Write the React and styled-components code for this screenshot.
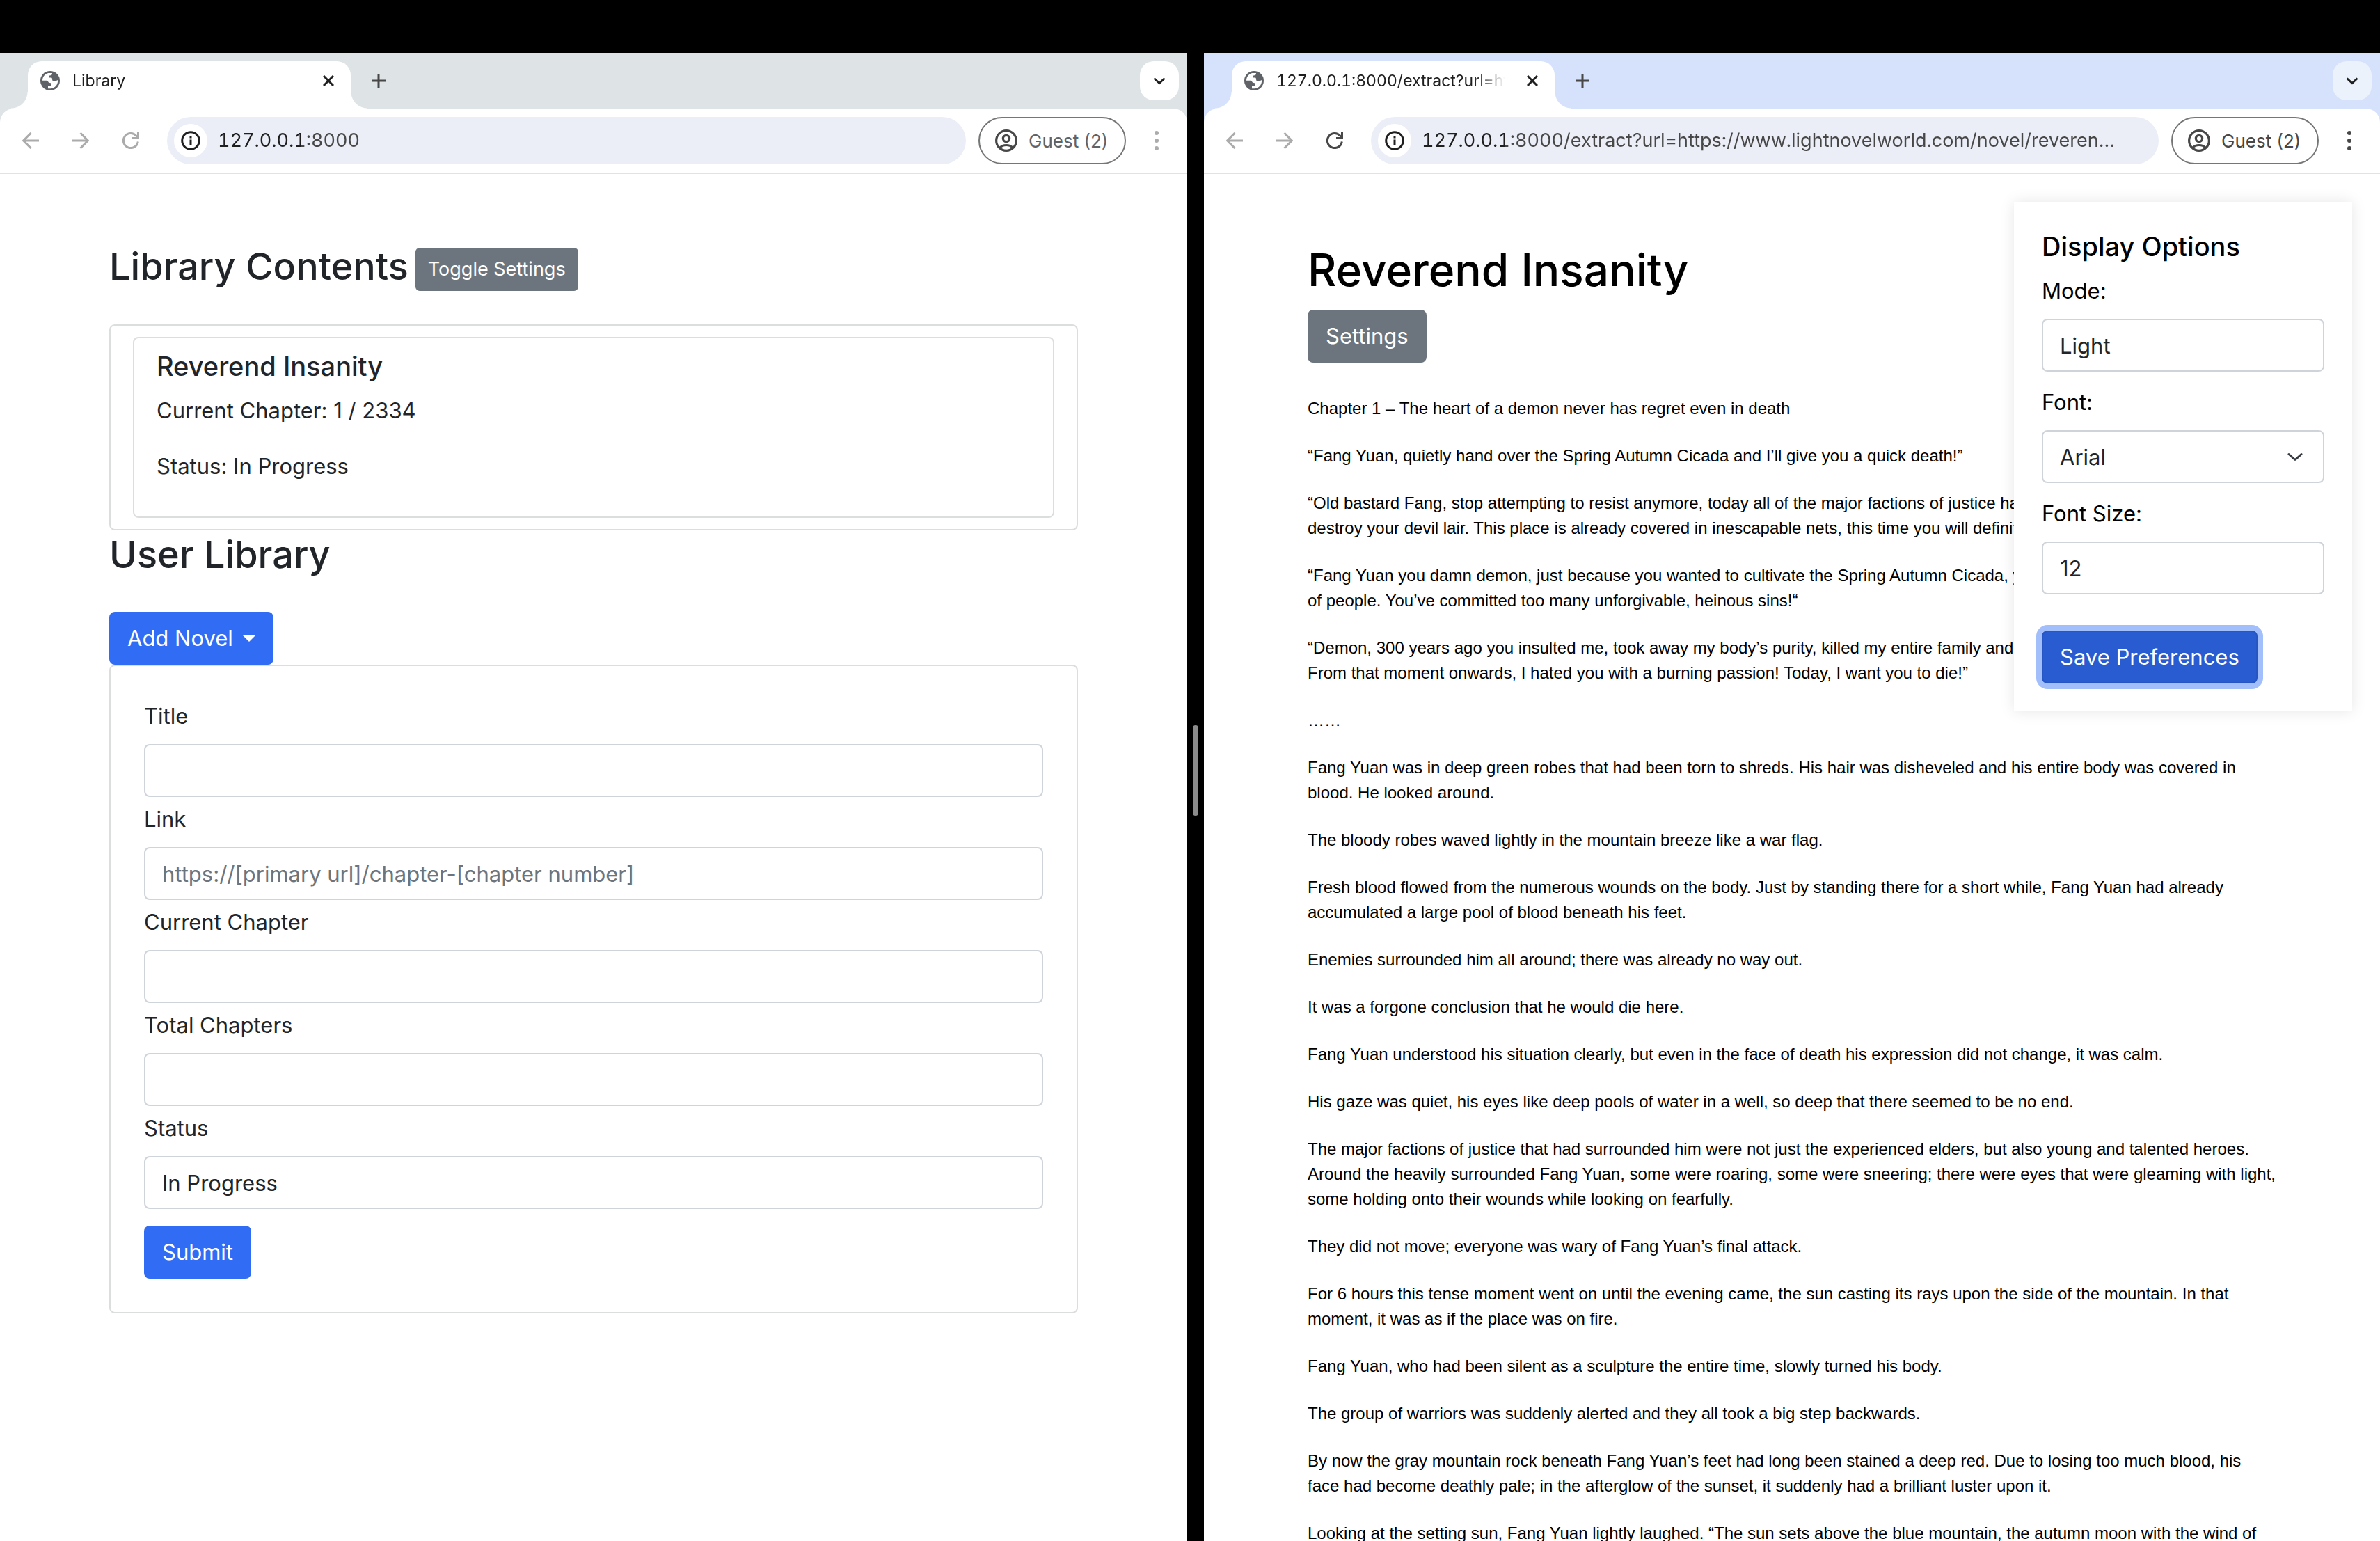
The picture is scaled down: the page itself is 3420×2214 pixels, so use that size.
import React from "react";
import styled, { createGlobalStyle } from "styled-components";

const UI_FONT = `Inter, "Liberation Sans", sans-serif`;
const ARIAL = `"Liberation Sans", Arial, sans-serif`;

const GlobalStyle = createGlobalStyle`
  *, *::before, *::after { box-sizing: border-box; }
  body { margin: 0; background: #000; font-family: ${UI_FONT}; }
  h1, h2, h3, h5, p { margin: 0; }
  button, input, select { margin: 0; font-family: inherit; }
`;

/* ---------- Desktop split view ---------- */

const Desktop = styled.div`
  display: grid;
  grid-template-columns: minmax(0, 853fr) 24px minmax(0, 845fr);
  height: 100vh;
  padding-top: 76px;
  overflow: hidden;
  background: #000;
`;

const Divider = styled.div`
  display: flex;
  justify-content: center;
  align-items: center;
  padding-bottom: 76px;
`;

const DividerHandle = styled.div`
  width: 8px;
  height: 130px;
  border-radius: 4px;
  background: #8c8c8c;
`;

const Window = styled.section`
  display: flex;
  flex-direction: column;
  min-width: 0;
  min-height: 0;
  background: ${(p) => p.$frame};
`;

/* ---------- Browser chrome ---------- */

const TabStrip = styled.div`
  display: flex;
  align-items: flex-start;
  height: 80px;
  padding: 12px 12px 0 40px;
`;

const Tab = styled.div`
  position: relative;
  display: flex;
  align-items: center;
  width: 464px;
  height: 68px;
  padding: 0 24px 12px 18px;
  border-radius: 20px 20px 0 0;
  background: #fff;

  &::before,
  &::after {
    content: "";
    position: absolute;
    bottom: 0;
    width: 24px;
    height: 24px;
  }
  &::before {
    right: 100%;
    background: radial-gradient(circle at 0 0, transparent 23px, #fff 24px);
  }
  &::after {
    left: 100%;
    background: radial-gradient(circle at 100% 0, transparent 23px, #fff 24px);
  }
`;

const TabTitle = styled.span`
  flex: 1;
  min-width: 0;
  margin: 0 31px 0 18px;
  overflow: hidden;
  white-space: nowrap;
  font-size: 23px;
  line-height: 32px;
  font-variant-numeric: tabular-nums;
  color: #1f1f1f;
  mask-image: linear-gradient(to left, transparent, #000 44px);
`;

const IconButton = styled.button`
  display: flex;
  align-items: center;
  justify-content: center;
  flex: none;
  padding: 0;
  border: 0;
  background: none;
  color: ${(p) => p.$color || "#474747"};
`;

const NewTabButton = styled(IconButton)`
  height: 56px;
  margin-left: 30px;
`;

const TabSearchButton = styled(IconButton)`
  width: 56px;
  height: 56px;
  margin-left: auto;
  border-radius: 20px;
  background: ${(p) => p.$fill};
`;

const Toolbar = styled.div`
  display: flex;
  align-items: center;
  padding: 12px 32px;
  border-radius: 20px 20px 0 0;
  border-bottom: 2px solid #e1e3e1;
  background: #fff;
`;

const NavButtons = styled.div`
  display: flex;
  gap: 48px;
  margin-right: 40px;
`;

const AddressBar = styled.label`
  display: flex;
  align-items: center;
  flex: 1;
  min-width: 0;
  height: 68px;
  padding: 0 52px 0 10px;
  border-radius: 34px;
  background: #ebeef7;
`;

const SiteInfo = styled.span`
  display: flex;
  align-items: center;
  justify-content: center;
  flex: none;
  width: 48px;
  height: 48px;
  margin-right: 15px;
  border-radius: 50%;
  background: #fff;
  color: #1f1f1f;
`;

const UrlInput = styled.input`
  flex: 1;
  min-width: 0;
  padding: 0;
  border: 0;
  outline: 0;
  font-size: 27px;
  line-height: 40px;
  font-variant-numeric: tabular-nums;
  text-overflow: ellipsis;
  color: transparent;
  background: linear-gradient(to right, #1f1f1f 120px, #474747 120px);
  background-clip: text;
  -webkit-background-clip: text;
`;

const ProfileButton = styled.button`
  display: flex;
  align-items: center;
  flex: none;
  gap: 16px;
  width: 212px;
  height: 68px;
  margin: 0 32px 0 18px;
  padding: 0 0 0 22px;
  border: 2px solid #747775;
  border-radius: 34px;
  background: #fff;
  font-size: 26px;
  white-space: nowrap;
  color: ${(p) => p.$color};

  svg { flex: none; color: #474747; }
`;

const Page = styled.main`
  position: relative;
  flex: 1;
  min-height: 0;
  overflow: hidden;
  background: #fff;
`;

const Container = styled.div`
  max-width: 1440px;
  margin: 0 auto;
  padding: 96px 24px 0;
  color: ${(p) => p.$color};
`;

/* ---------- Shared form parts ---------- */

const Button = styled.button`
  display: inline-flex;
  align-items: center;
  gap: 14px;
  padding: 12px 24px;
  border: 2px solid ${(p) => p.$edge || p.$fill};
  border-radius: 8px;
  background: ${(p) => p.$fill};
  box-shadow: ${(p) => (p.$focused ? "0 0 0 8px #a2bffc" : "none")};
  font-size: 31px;
  line-height: 48px;
  color: #fff;
`;

const SmallButton = styled(Button)`
  padding: 8px 16px;
  border-radius: 6px;
  font-size: 27px;
  line-height: 42px;
`;

const Caret = styled.span`
  border-top: 9px solid currentColor;
  border-left: 9px solid transparent;
  border-right: 9px solid transparent;
`;

const FieldLabel = styled.label`
  display: block;
  margin-bottom: 16px;
  font-size: 31px;
  line-height: 48px;
`;

const Control = styled.input`
  display: block;
  width: 100%;
  height: 76px;
  padding: 0 24px;
  border: 2px solid #ced4da;
  border-radius: 8px;
  outline: 0;
  appearance: none;
  background: #fff;
  font-size: 31px;
  color: #212529;

  &::placeholder { color: #6c757d; opacity: 1; }
  &[type="number"] { appearance: textfield; }
`;

const SelectWrap = styled.div`
  display: grid;
  align-items: center;

  > * { grid-area: 1 / 1; }
  > svg { justify-self: end; margin-right: 26px; pointer-events: none; color: #343a40; }
`;

/* ---------- Library page ---------- */

const HeaderRow = styled.div`
  display: flex;
  align-items: flex-end;
  gap: 10px;
  height: 72px;
  margin-bottom: 48px;
`;

const Heading = styled.h2`
  font-size: 54px;
  font-weight: 500;
  line-height: 70px;
`;

const Card = styled.div`
  padding: ${(p) => p.$pad};
  border: 2px solid #dcdddd;
  border-radius: 8px;
`;

const Subheading = styled.h5`
  margin-bottom: 16px;
  font-size: 38px;
  font-weight: 500;
  line-height: 48px;
`;

const Meta = styled.p`
  margin-bottom: 32px;
  font-size: 31px;
  line-height: 48px;
`;

const AddRow = styled.div`
  margin-top: 47px;
`;

const NovelForm = styled.form`
  display: flex;
  flex-direction: column;
  gap: 8px;
`;

const SubmitRow = styled.div`
  margin-top: 16px;
  height: 76px;
`;

/* ---------- Reader page ---------- */

const NovelTitle = styled.h1`
  margin-bottom: 16px;
  font-size: 64px;
  font-weight: 500;
  line-height: 83px;
`;

const Story = styled.article`
  display: flex;
  flex-direction: column;
  gap: 32px;
  margin-top: 48px;
  font-family: ${ARIAL};
  font-size: 24px;
  line-height: 36px;
  white-space: pre-line;
`;

const OptionsPanel = styled.form`
  position: absolute;
  top: 40px;
  right: 40px;
  display: flex;
  flex-direction: column;
  gap: 20px;
  width: 486px;
  padding: 40px;
  background: #fff;
  box-shadow: 0 0 20px rgba(0, 0, 0, 0.1);
  color: #000;
`;

const PanelTitle = styled.h3`
  margin-bottom: -4px;
  font-size: 38px;
  font-weight: 500;
  line-height: 48px;
`;

const SaveRow = styled.div`
  margin-top: 32px;
  height: 76px;
`;

/* ---------- Icons ---------- */

const Stroke = ({ size, width = 3, box = size, children, cap = "butt" }) => (
  <svg width={size} height={size} viewBox={`0 0 ${box} ${box}`} fill="none" stroke="currentColor" strokeWidth={width} strokeLinecap={cap} aria-hidden="true">
    {children}
  </svg>
);

const GlobeIcon = () => (
  <svg width="28" height="28" viewBox="0 0 28 28" aria-hidden="true">
    <circle cx="14" cy="14" r="14" fill="#5f6368" />
    <path
      fill="#fff"
      d="M3 13.800C3 8.500 6.500 4 11.500 3H17C17 5.500 16 6.500 12.500 6.500V9.500H15.500C17 9.500 17 11 17 12C17 14.500 19.500 15.500 21.500 14.500L25.200 13C25.500 19.500 21 25 14.500 25.200H11V21.500H13.500C15.500 21.500 16.200 20 15.800 18C15.500 17 14 17.200 12.500 16.800C11 16.200 11.200 13.800 8.500 13.800Z"
    />
  </svg>
);

const BackIcon = () => (
  <Stroke size={24}><path d="M24 12H3M12.500 1 1.700 12l10.800 11" /></Stroke>
);

const ForwardIcon = () => (
  <Stroke size={24}><path d="M0 12h21M11.500 1l10.800 11-10.800 11" /></Stroke>
);

const ReloadIcon = () => (
  <Stroke size={24}>
    <path d="M22.300 13.500A10.500 10.500 0 1 1 19.600 4.900l2 2.500" />
    <path d="M22.500 0v8.500H14" />
  </Stroke>
);

const CloseIcon = () => (
  <Stroke size={16}><path d="M1 1l14 14M15 1L1 15" /></Stroke>
);

const PlusIcon = () => (
  <Stroke size={20}><path d="M10 0v20M0 10h20" /></Stroke>
);

const ChevronIcon = () => (
  <Stroke size={18}><path d="M1.500 5.500 9 12.500l7.500-7" /></Stroke>
);

const SelectChevron = () => (
  <Stroke size={32} box={32} cap="round"><path d="M7 12.500l9 8 9-8" strokeLinejoin="round" /></Stroke>
);

const InfoIcon = () => (
  <Stroke size={28}>
    <circle cx="14" cy="14" r="12.3" />
    <path d="M14 12.500V20.500M14 7.500v3" />
  </Stroke>
);

const PersonIcon = () => (
  <Stroke size={32} width={3.2}>
    <circle cx="16" cy="16" r="14.400" />
    <circle cx="16" cy="13" r="4.600" />
    <path d="M6.500 26.300C11.500 21.200 20.500 21.200 25.500 26.300" />
  </Stroke>
);

const MenuIcon = () => (
  <svg width="24" height="28" viewBox="0 0 24 28" fill="currentColor" aria-hidden="true">
    <circle cx="12" cy="3" r="3" />
    <circle cx="12" cy="14" r="3" />
    <circle cx="12" cy="25" r="3" />
  </svg>
);

/* ---------- Browser window ---------- */

function Browser({ title, url, frame, searchFill, active, children }) {
  const strong = active ? "#474747" : "#ababab";
  return (
    <Window $frame={frame} aria-label={title}>
      <TabStrip>
        <Tab>
          <GlobeIcon />
          <TabTitle>{title}</TabTitle>
          <IconButton type="button" aria-label="Close tab" $color="#1f1f1f"><CloseIcon /></IconButton>
        </Tab>
        <NewTabButton type="button" aria-label="New tab"><PlusIcon /></NewTabButton>
        <TabSearchButton type="button" aria-label="Search tabs" $fill={searchFill} $color="#1f1f1f"><ChevronIcon /></TabSearchButton>
      </TabStrip>
      <Toolbar>
        <NavButtons>
          <IconButton type="button" aria-label="Back" $color="#ababab"><BackIcon /></IconButton>
          <IconButton type="button" aria-label="Forward" $color="#ababab"><ForwardIcon /></IconButton>
          <IconButton type="button" aria-label="Reload" $color={strong}><ReloadIcon /></IconButton>
        </NavButtons>
        <AddressBar>
          <SiteInfo><InfoIcon /></SiteInfo>
          <UrlInput type="text" aria-label="Address" defaultValue={url} />
        </AddressBar>
        <ProfileButton type="button" $color={active ? "#474747" : "#5f6368"}>
          <PersonIcon />
          Guest (2)
        </ProfileButton>
        <IconButton type="button" aria-label="Menu" $color={strong}><MenuIcon /></IconButton>
      </Toolbar>
      <Page>{children}</Page>
    </Window>
  );
}

function Field({ id, label, children, ...rest }) {
  return (
    <div>
      <FieldLabel htmlFor={id}>{label}</FieldLabel>
      {children || <Control id={id} {...rest} />}
    </div>
  );
}

function LibraryPage() {
  return (
    <Container $color="#212529">
      <HeaderRow>
        <Heading>Library Contents</Heading>
        <SmallButton type="button" $fill="#6c757d">Toggle Settings</SmallButton>
      </HeaderRow>
      <Card $pad="16px 32px">
        <Card $pad="16px 32px">
          <Subheading>Reverend Insanity</Subheading>
          <Meta>Current Chapter: 1 / 2334</Meta>
          <Meta>Status: In Progress</Meta>
        </Card>
      </Card>
      <Heading>User Library</Heading>
      <AddRow>
        <Button type="button" $fill="#316cf4">Add Novel <Caret /></Button>
      </AddRow>
      <Card $pad="48px">
        <NovelForm>
          <Field id="title" label="Title" type="text" />
          <Field id="link" label="Link" type="text" placeholder="https://[primary url]/chapter-[chapter number]" />
          <Field id="current" label="Current Chapter" type="number" />
          <Field id="total" label="Total Chapters" type="number" />
          <Field id="status" label="Status">
            <Control as="select" id="status"><option>In Progress</option></Control>
          </Field>
          <SubmitRow>
            <Button type="button" $fill="#316cf4">Submit</Button>
          </SubmitRow>
        </NovelForm>
      </Card>
    </Container>
  );
}

const PARAGRAPHS = [
  "Chapter 1 – The heart of a demon never has regret even in death",
  "“Fang Yuan, quietly hand over the Spring Autumn Cicada and I’ll give you a quick death!”",
  "“Old bastard Fang, stop attempting to resist anymore, today all of the major factions of justice have joined up to\ndestroy your devil lair. This place is already covered in inescapable nets, this time you will definitely die!”",
  "“Fang Yuan you damn demon, just because you wanted to cultivate the Spring Autumn Cicada, you killed thousands\nof people. You’ve committed too many unforgivable, heinous sins!“",
  "“Demon, 300 years ago you insulted me, took away my body’s purity, killed my entire family and my nine clans.\nFrom that moment onwards, I hated you with a burning passion! Today, I want you to die!”",
  "……",
  "Fang Yuan was in deep green robes that had been torn to shreds. His hair was disheveled and his entire body was covered in blood. He looked around.",
  "The bloody robes waved lightly in the mountain breeze like a war flag.",
  "Fresh blood flowed from the numerous wounds on the body. Just by standing there for a short while, Fang Yuan had already accumulated a large pool of blood beneath his feet.",
  "Enemies surrounded him all around; there was already no way out.",
  "It was a forgone conclusion that he would die here.",
  "Fang Yuan understood his situation clearly, but even in the face of death his expression did not change, it was calm.",
  "His gaze was quiet, his eyes like deep pools of water in a well, so deep that there seemed to be no end.",
  "The major factions of justice that had surrounded him were not just the experienced elders, but also young and talented heroes. Around the heavily surrounded Fang Yuan, some were roaring, some were sneering; there were eyes that were gleaming with light, some holding onto their wounds while looking on fearfully.",
  "They did not move; everyone was wary of Fang Yuan’s final attack.",
  "For 6 hours this tense moment went on until the evening came, the sun casting its rays upon the side of the mountain. In that moment, it was as if the place was on fire.",
  "Fang Yuan, who had been silent as a sculpture the entire time, slowly turned his body.",
  "The group of warriors was suddenly alerted and they all took a big step backwards.",
  "By now the gray mountain rock beneath Fang Yuan’s feet had long been stained a deep red. Due to losing too much blood, his face had become deathly pale; in the afterglow of the sunset, it suddenly had a brilliant luster upon it.",
  "Looking at the setting sun, Fang Yuan lightly laughed. “The sun sets above the blue mountain, the autumn moon with the wind of",
];

function ReaderPage() {
  return (
    <>
      <Container $color="#000">
        <NovelTitle>Reverend Insanity</NovelTitle>
        <Button type="button" $fill="#6c757d">Settings</Button>
        <Story>
          {PARAGRAPHS.map((text) => <p key={text}>{text}</p>)}
        </Story>
      </Container>
      <OptionsPanel>
        <PanelTitle>Display Options</PanelTitle>
        <Field id="mode" label="Mode:">
          <Control as="select" id="mode"><option>Light</option></Control>
        </Field>
        <Field id="font" label="Font:">
          <SelectWrap>
            <Control as="select" id="font"><option>Arial</option></Control>
            <SelectChevron />
          </SelectWrap>
        </Field>
        <Field id="size" label="Font Size:" type="number" defaultValue="12" />
        <SaveRow>
          <Button type="button" $fill="#295cd0" $edge="#2556c3" $focused>Save Preferences</Button>
        </SaveRow>
      </OptionsPanel>
    </>
  );
}

export default function App() {
  return (
    <>
      <GlobalStyle />
      <Desktop>
        <Browser title="Library" url="127.0.0.1:8000" frame="#dee3e6" searchFill="#fff">
          <LibraryPage />
        </Browser>
        <Divider><DividerHandle /></Divider>
        <Browser
          active
          title="127.0.0.1:8000/extract?url=https://www.lightnovelworld.com"
          url="127.0.0.1:8000/extract?url=https://www.lightnovelworld.com/novel/reverend-insanity/chapter-1"
          frame="#d6e1fb"
          searchFill="#ebf2fc"
        >
          <ReaderPage />
        </Browser>
      </Desktop>
    </>
  );
}
